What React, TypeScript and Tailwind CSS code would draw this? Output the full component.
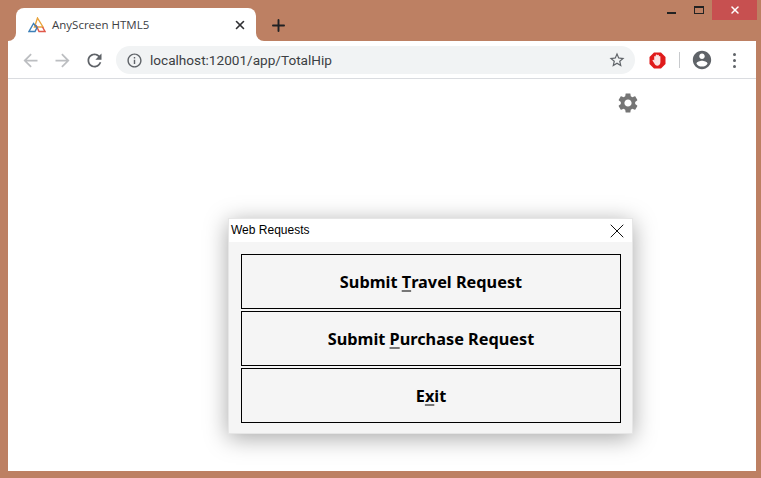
import { X, Plus } from "lucide-react";

const Icon = ({ d, size, color }: { d: string; size: number; color: string }) => (
    <svg width={size} height={size} viewBox="0 0 24 24" fill={color} className="shrink-0">
        <path d={d} />
    </svg>
);

const Flare = ({ right }: { right?: boolean }) => (
    <div className="w-2 h-2 bg-white">
        <div className={`w-2 h-2 bg-[#bd8063] ${right ? "rounded-bl-lg" : "rounded-br-lg"}`} />
    </div>
);

const Logo = () => (
    <svg width="18" height="16" viewBox="0 0 18 16" fill="none" className="shrink-0">
        <path d="M9.5 1 L15 10 H6.5 Z" stroke="#e8a33d" strokeWidth="1.4" />
        <path d="M8 8 L11 14.5 H17 L14.5 10" stroke="#e0584a" strokeWidth="1.4" />
        <path d="M5.5 6.5 L1 14.5 H7 L9 10.5 Z" stroke="#3d80b8" strokeWidth="1.4" />
    </svg>
);

const TabStrip = () => (
    <div className="flex h-[41px] shrink-0 pl-2 pr-1">
        <div className="flex items-end mt-2">
            <Flare />
            <div className="w-[240px] h-[33px] bg-white rounded-t-lg flex items-center pl-3 pr-[9px]">
                <Logo />
                <span className="ml-[6px] text-[11.5px] text-[#3c4043] font-['Open_Sans',sans-serif]">AnyScreen HTML5</span>
                <X size={14} strokeWidth={2.8} color="#303134" className="ml-auto" />
            </div>
            <Flare right />
        </div>
        <div className="ml-[5px] mt-4 h-[19px]">
            <Plus size={19} strokeWidth={2.4} color="#202124" />
        </div>
        <div className="ml-auto flex h-5 items-start">
            <div className="w-[9px] h-[2px] bg-[#222] mt-3 mr-[18px]" />
            <div className="w-[10px] h-2 border border-t-2 border-[#222] mt-[6px] mr-[8px]" />
            <div className="w-[45px] h-5 bg-[#c75050] flex items-center justify-center">
                <X size={12} strokeWidth={3} color="#fff" />
            </div>
        </div>
    </div>
);

const Toolbar = () => (
    <div className="h-[38px] shrink-0 bg-white border-b border-[#dadce0] flex items-start pt-[5px]">
        <div className="w-[108px] h-7 flex items-center gap-[11px] pl-[11.5px]">
            <Icon size={21} color="#bcbec1" d="M20 11H7.83l5.59-5.59L12 4l-8 8 8 8 1.41-1.41L7.83 13H20v-2z" />
            <Icon size={21} color="#bcbec1" d="M12 4l-1.41 1.41L16.17 11H4v2h12.17l-5.58 5.59L12 20l8-8z" />
            <Icon size={21} color="#5f6368" d="M17.65 6.35C16.2 4.9 14.21 4 12 4c-4.42 0-7.99 3.58-7.99 8s3.57 8 7.99 8c3.73 0 6.84-2.55 7.73-6h-2.08c-.82 2.33-3.04 4-5.65 4-3.31 0-6-2.69-6-6s2.69-6 6-6c1.66 0 3.14.69 4.22 1.78L13 11h7V4l-2.35 2.35z" />
        </div>
        <div className="w-[519px] h-7 bg-[#f1f3f4] rounded-full flex items-center pl-[9.5px] pr-[9px]">
            <Icon size={17} color="#5f6368" d="M11 7h2v2h-2zm0 4h2v6h-2zm1-9C6.48 2 2 6.48 2 12s4.48 10 10 10 10-4.48 10-10S17.52 2 12 2zm0 18c-4.41 0-8-3.59-8-8s3.59-8 8-8 8 3.59 8 8-3.59 8-8 8z" />
            <span className="ml-[7.5px] text-[13.6px] text-[#3c4043] font-['Roboto',sans-serif]">localhost:12001/app/TotalHip</span>
            <div className="ml-auto">
                <Icon size={18} color="#5f6368" d="M22 9.24l-7.19-.62L12 2 9.19 8.63 2 9.24l5.46 4.73L5.82 21 12 17.27 18.18 21l-1.63-7.03L22 9.24zM12 15.4l-3.76 2.27 1-4.28-3.32-2.88 4.38-.38L12 6.1l1.71 4.04 4.38.38-3.32 2.88 1 4.28L12 15.4z" />
            </div>
        </div>
        <div className="h-7 flex items-center pl-[14px]">
            <svg width="17" height="17" viewBox="0 0 17 17" className="shrink-0">
                <path d="M5 0.5 H12 L16.5 5 V12 L12 16.5 H5 L0.5 12 V5 Z" fill="#e01b1b" />
                <path d="M5.2 8 V4.6 a.8 .8 0 0 1 1.5 0 V3.4 a.8 .8 0 0 1 1.6 0 V3.6 a.8 .8 0 0 1 1.6 0 V4.6 a.8 .8 0 0 1 1.5 0 V10 C11.4 12.6 9.8 13.8 8.4 13.8 C6.8 13.8 5.9 12.7 4.9 10.8 L3.6 8.8 C3.4 7.8 4.6 7.4 5.2 8.5 Z" fill="#fbe4e4" />
            </svg>
            <div className="w-px h-4 bg-[#c8cacd] ml-[13px]" />
            <div className="ml-[11px]">
                <Icon size={22} color="#5f6368" d="M12 2C6.48 2 2 6.48 2 12s4.48 10 10 10 10-4.48 10-10S17.52 2 12 2zm0 3c1.66 0 3 1.34 3 3s-1.34 3-3 3-3-1.34-3-3 1.34-3 3-3zm0 14.2c-2.5 0-4.71-1.28-6-3.22.03-1.99 4-3.08 6-3.08 1.99 0 5.97 1.09 6 3.08-1.29 1.94-3.5 3.22-6 3.22z" />
            </div>
            <div className="ml-5 flex flex-col gap-[3px]">
                <div className="w-[3px] h-[3px] rounded-full bg-[#5f6368]" />
                <div className="w-[3px] h-[3px] rounded-full bg-[#5f6368]" />
                <div className="w-[3px] h-[3px] rounded-full bg-[#5f6368]" />
            </div>
        </div>
    </div>
);

const Key = ({ children }: { children: string }) => (
    <span className="underline decoration-[#777] decoration-2 underline-offset-2">{children}</span>
);

const DialogButton = ({ children }: { children: React.ReactNode }) => (
    <button className="w-[380px] h-[55px] border border-black pt-[2px] bg-[#f5f5f5] text-[16.3px] font-bold text-black font-['Noto_Sans',sans-serif] flex items-center justify-center whitespace-pre">
        {children}
    </button>
);

const Dialog = () => (
    <div className="ml-[220px] mt-[103px] w-[405px] h-[216px] border border-[#e6e6e6] bg-[#f5f5f5] shadow-[0_4px_22px_rgba(0,0,0,0.35)]">
        <div className="h-[23px] bg-white flex items-center pl-[2px] pr-[3px]">
            <span className="text-[12px] text-black font-['Liberation_Sans',sans-serif] pb-[2px]">Web Requests</span>
            <X size={24} strokeWidth={1} color="#111" className="ml-auto" />
        </div>
        <div className="flex flex-col gap-[2px] pt-3 px-3">
            <DialogButton>Submit <Key>T</Key>ravel Request</DialogButton>
            <DialogButton>Submit <Key>P</Key>urchase Request</DialogButton>
            <DialogButton>E<Key>x</Key>it</DialogButton>
        </div>
    </div>
);

export default function App() {
    return (
        <div className="w-[761px] h-[478px] bg-[#bd8063] flex flex-col overflow-hidden">
            <TabStrip />
            <div className="ml-2 mr-[5px] mb-[7px] flex-1 flex flex-col bg-white">
                <Toolbar />
                <div className="flex-1 pt-3">
                    <div className="ml-[608px]">
                        <Icon size={24} color="#757575" d="M19.14 12.94c.04-.3.06-.61.06-.94 0-.32-.02-.64-.07-.94l2.03-1.58c.18-.14.23-.41.12-.61l-1.92-3.32c-.12-.22-.37-.29-.59-.22l-2.39.96c-.5-.38-1.03-.7-1.62-.94l-.36-2.54c-.04-.24-.24-.41-.48-.41h-3.84c-.24 0-.43.17-.47.41l-.36 2.54c-.59.24-1.13.57-1.62.94l-2.39-.96c-.22-.08-.47 0-.59.22L2.74 8.87c-.12.21-.08.47.12.61l2.03 1.58c-.05.3-.09.63-.09.94s.02.64.07.94l-2.03 1.58c-.18.14-.23.41-.12.61l1.92 3.32c.12.22.37.29.59.22l2.39-.96c.5.38 1.03.7 1.62.94l.36 2.54c.05.24.24.41.48.41h3.84c.24 0 .44-.17.47-.41l.36-2.54c.59-.24 1.13-.56 1.62-.94l2.39.96c.22.08.47 0 .59-.22l1.92-3.32c.12-.22.07-.47-.12-.61l-2.01-1.58zM12 15.6c-1.98 0-3.6-1.62-3.6-3.6s1.62-3.6 3.6-3.6 3.6 1.62 3.6 3.6-1.62 3.6-3.6 3.6z" />
                    </div>
                    <Dialog />
                </div>
            </div>
        </div>
    );
}
